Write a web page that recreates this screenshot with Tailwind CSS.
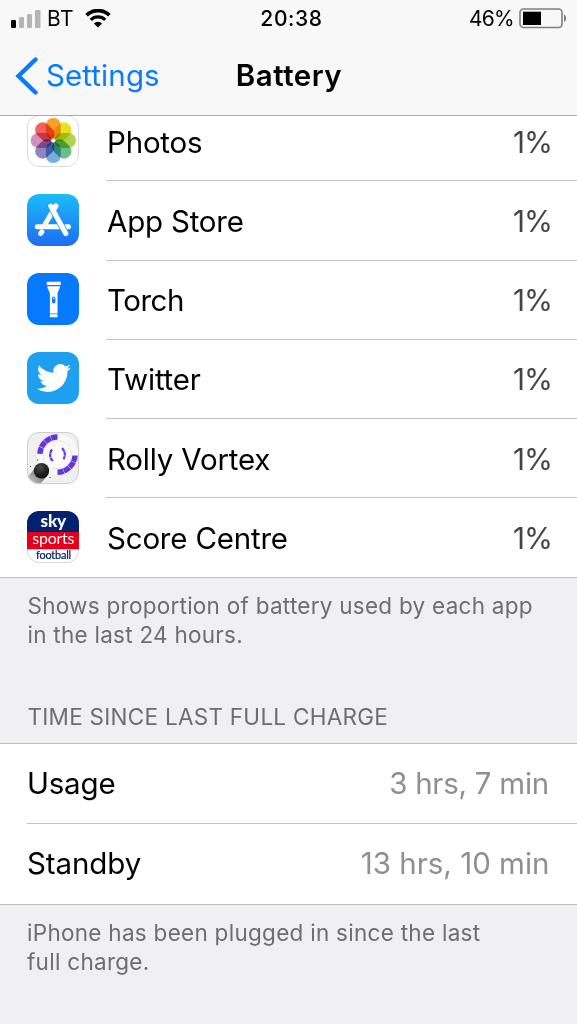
<!DOCTYPE html>
<html lang="en">
<head>
    <meta charset="UTF-8">
    <meta name="viewport" content="width=device-width, initial-scale=1.0">
    <title>Battery</title>
    <script src="https://cdn.jsdelivr.net/npm/@tailwindcss/browser@4"></script>
</head>
<body class="bg-[#efeff4] font-['Inter',sans-serif] text-black w-[577px] h-[1024px] overflow-hidden">

    <!-- Status bar and navigation bar -->
    <header class="relative z-10 h-[116px] bg-[#f8f8f9] border-b border-[#a9a9ac]">
        <div class="grid grid-cols-3 items-center h-[37px] pl-[11px] pr-[10px] text-[21px] leading-none">
            <div class="flex items-center">
                <svg class="w-[30px] h-[18px]" viewBox="0 0 30 18">
                    <rect x="0" y="10" width="5" height="8" rx="1.3" fill="#000"/>
                    <rect x="8" y="7" width="5" height="11" rx="1.3" fill="#b4b4b5"/>
                    <rect x="16" y="4" width="5" height="14" rx="1.3" fill="#b4b4b5"/>
                    <rect x="24" y="0" width="5.5" height="18" rx="1.3" fill="#b4b4b5"/>
                </svg>
                <span class="ml-[6px] tracking-[0.4px]">BT</span>
                <svg class="ml-[11px] w-[26px] h-[19px]" viewBox="0 0 26 19">
                    <path d="M1.6 6.2a16.4 16.4 0 0 1 22.8 0" fill="none" stroke="#000" stroke-width="3.6"/>
                    <path d="M5.8 10.8a10.4 10.4 0 0 1 14.4 0" fill="none" stroke="#000" stroke-width="3.2"/>
                    <path d="M13 18.4L8.9 14.4a5.9 5.9 0 0 1 8.2 0z" fill="#000"/>
                </svg>
            </div>
            <div class="pl-[5px] text-center font-medium tracking-[0.6px]">20:38</div>
            <div class="flex items-center justify-end">
                <span class="tracking-[-0.7px] mr-[5px]">46%</span>
                <svg class="w-[48px] h-[21px]" viewBox="0 0 48 21">
                    <rect x="1" y="1" width="42" height="18.5" rx="3.5" fill="none" stroke="#7f7f80" stroke-width="1.6"/>
                    <rect x="4" y="3.7" width="18" height="13.3" fill="#000"/>
                    <path d="M45 6.5c2.8 1 2.8 6.5 0 7.5z" fill="#7f7f80"/>
                </svg>
            </div>
        </div>
        <div class="grid grid-cols-3 items-center h-[78px] pl-[15px] pr-[15px] text-[29.5px] leading-none">
            <div class="flex items-center text-[#0a7aff]">
                <svg class="w-[24px] h-[38px]" viewBox="0 0 24 38">
                    <path d="M20.5 2.5L3.5 19l17 16.5" fill="none" stroke="#0a7aff" stroke-width="4.4" stroke-linecap="round"/>
                </svg>
                <span class="ml-[7px] tracking-[0.1px]">Settings</span>
            </div>
            <h1 class="pl-[1px] text-center font-semibold tracking-[0.5px]">Battery</h1>
        </div>
    </header>

    <!-- App usage list, scrolled partly under the header -->
    <ul class="-mt-[13.8px] bg-white border-b border-[#bcbcc0] text-[29.5px] leading-none tracking-[-0.2px]">
        <li class="flex h-[79.25px] pl-[27px]">
            <svg class="self-center shrink-0 mb-[2px] w-[52px] h-[52px]" viewBox="0 0 52 52">
                <rect x=".5" y=".5" width="51" height="51" rx="11.5" fill="#fff" stroke="#dcdcdc"/>
                <g transform="translate(26.3 25.5)" class="isolate">
                    <rect x="-7.4" y="-22.5" width="14.8" height="21" rx="7.2" fill="#f9a12b" class="mix-blend-multiply"/>
                    <rect x="-7.4" y="-22.5" width="14.8" height="21" rx="7.2" fill="#ebe01e" class="mix-blend-multiply" transform="rotate(45)"/>
                    <rect x="-7.4" y="-22.5" width="14.8" height="21" rx="7.2" fill="#b0d44c" class="mix-blend-multiply" transform="rotate(90)"/>
                    <rect x="-7.4" y="-22.5" width="14.8" height="21" rx="7.2" fill="#67bf8c" class="mix-blend-multiply" transform="rotate(135)"/>
                    <rect x="-7.4" y="-22.5" width="14.8" height="21" rx="7.2" fill="#72aee0" class="mix-blend-multiply" transform="rotate(180)"/>
                    <rect x="-7.4" y="-22.5" width="14.8" height="21" rx="7.2" fill="#8f86c0" class="mix-blend-multiply" transform="rotate(225)"/>
                    <rect x="-7.4" y="-22.5" width="14.8" height="21" rx="7.2" fill="#d38fbd" class="mix-blend-multiply" transform="rotate(270)"/>
                    <rect x="-7.4" y="-22.5" width="14.8" height="21" rx="7.2" fill="#f1605a" class="mix-blend-multiply" transform="rotate(315)"/>
                    <circle r="2" fill="#fff"/>
                </g>
            </svg>
            <div class="flex flex-1 items-center justify-between ml-[27px] pl-[1px] pr-[25px] pt-[2px] border-b border-[#c3c3c6]">
                <span>Photos</span>
                <span class="text-[#444446] tracking-[-1px]">1%</span>
            </div>
        </li>
        <li class="flex h-[79.25px] pl-[27px]">
            <svg class="self-center shrink-0 mb-[2px] w-[52px] h-[52px]" viewBox="0 0 52 52">
                <defs>
                    <linearGradient id="storeBlue" x1="0" y1="0" x2="0" y2="1">
                        <stop offset="0" stop-color="#1cbcf9"/>
                        <stop offset="1" stop-color="#1d6df1"/>
                    </linearGradient>
                </defs>
                <rect width="52" height="52" rx="12" fill="url(#storeBlue)"/>
                <g fill="none" stroke="#fff" stroke-width="5" stroke-linecap="round">
                    <path d="M10.3 32.8H32M38.5 32.8H41.5"/>
                    <path d="M28.8 12L17.7 31M14.8 37.8L13.7 39.5"/>
                    <path d="M23.7 12L38.8 39.5" stroke="#1f90f5" stroke-width="6.6"/>
                    <path d="M28.8 12L26.3 16.4"/>
                    <path d="M23.7 12L38.8 39.5"/>
                </g>
            </svg>
            <div class="flex flex-1 items-center justify-between ml-[27px] pl-[1px] pr-[25px] pt-[2px] border-b border-[#c3c3c6]">
                <span>App Store</span>
                <span class="text-[#444446] tracking-[-1px]">1%</span>
            </div>
        </li>
        <li class="flex h-[79.25px] pl-[27px]">
            <svg class="self-center shrink-0 mb-[2px] w-[52px] h-[52px]" viewBox="0 0 52 52">
                <rect width="52" height="52" rx="12" fill="#067aff"/>
                <path d="M19.7 8.7h14v3.4h-14zM20.3 13.2h12.8c0 3.2-2.6 4.6-2.6 8v19.2h-7.6V21.2c0-3.4-2.6-4.8-2.6-8zM22.9 41.3h7.6v3h-7.6z" fill="#fff"/>
                <rect x="25" y="23.5" width="3.4" height="7" rx="1.7" fill="#067aff"/>
                <circle cx="26.7" cy="25.3" r=".8" fill="#fff"/>
            </svg>
            <div class="flex flex-1 items-center justify-between ml-[27px] pl-[1px] pr-[25px] pt-[2px] border-b border-[#c3c3c6]">
                <span class="tracking-[-0.5px]">Torch</span>
                <span class="text-[#444446] tracking-[-1px]">1%</span>
            </div>
        </li>
        <li class="flex h-[79.25px] pl-[27px]">
            <svg class="self-center shrink-0 mb-[3px] w-[52px] h-[52px]" viewBox="0 0 52 52">
                <rect width="52" height="52" rx="12" fill="#1f9ff0"/>
                <path transform="translate(9.8 9) scale(1.42)" fill="#fff" d="M23.953 4.57a10 10 0 01-2.825.775 4.958 4.958 0 002.163-2.723c-.951.555-2.005.959-3.127 1.184a4.92 4.92 0 00-8.384 4.482C7.69 8.095 4.067 6.13 1.64 3.162a4.822 4.822 0 00-.666 2.475c0 1.71.87 3.213 2.188 4.096a4.904 4.904 0 01-2.228-.616v.06a4.923 4.923 0 003.946 4.827 4.996 4.996 0 01-2.212.085 4.936 4.936 0 004.604 3.417 9.867 9.867 0 01-6.102 2.105c-.39 0-.779-.023-1.17-.067a13.995 13.995 0 007.557 2.209c9.053 0 13.998-7.496 13.998-13.985 0-.21 0-.42-.015-.63A9.935 9.935 0 0024 4.59z"/>
            </svg>
            <div class="flex flex-1 items-center justify-between ml-[27px] pl-[1px] pr-[25px] pt-[2px] border-b border-[#c3c3c6]">
                <span>Twitter</span>
                <span class="text-[#444446] tracking-[-1px]">1%</span>
            </div>
        </li>
        <li class="flex h-[79.25px] pl-[27px]">
            <svg class="self-center shrink-0 mb-[2px] w-[52px] h-[52px]" viewBox="0 0 52 52">
                <defs>
                    <clipPath id="vortexClip"><rect width="52" height="52" rx="12"/></clipPath>
                    <linearGradient id="trail" x1="1" y1="0" x2="0" y2="1">
                        <stop offset="0" stop-color="#555"/>
                        <stop offset="1" stop-color="#ddd"/>
                    </linearGradient>
                    <radialGradient id="ball" cx=".4" cy=".3" r=".7">
                        <stop offset="0" stop-color="#4a4a4a"/>
                        <stop offset=".6" stop-color="#222"/>
                        <stop offset="1" stop-color="#111"/>
                    </radialGradient>
                </defs>
                <g clip-path="url(#vortexClip)">
                    <rect width="52" height="52" fill="#f0f0f1"/>
                    <circle cx="30.5" cy="22.7" r="21.5" fill="#f8f8f9" stroke="#e2e2e4" stroke-width=".7"/>
                    <circle cx="30.5" cy="22.7" r="14" fill="#fcfcfc" stroke="#e2e2e4" stroke-width=".8"/>
                    <circle cx="30.5" cy="22.7" r="10.5" fill="#fff" stroke="#e8e8ea" stroke-width=".7"/>
                    <g fill="none" stroke="#6534dd">
                        <path d="M12.9 21.8A17.5 17.5 0 0 1 30.5 5" stroke-width="5.4" stroke-dasharray="6.4 .4"/>
                        <path d="M48 23.5A17.5 17.5 0 0 1 30.5 40.2" stroke-width="5.4" stroke-dasharray="6.4 .4"/>
                        <path d="M25 17.5A8.3 8.3 0 0 0 26.2 29.2M35 16.2A8.3 8.3 0 0 1 36.4 27.2" stroke-width="2.2" stroke-dasharray="3.9 .4"/>
                    </g>
                    <path d="M8 36L0 46v10h10l10-12z" fill="url(#trail)"/>
                    <circle cx="14.5" cy="38.7" r="7.7" fill="url(#ball)"/>
                    <path d="M3 34h1v1H3zM10 27.5h1v1h-1zM22.5 45h1v1h-1z" fill="#333"/>
                </g>
                <rect x=".5" y=".5" width="51" height="51" rx="11.5" fill="none" stroke="#cfcfd0"/>
            </svg>
            <div class="flex flex-1 items-center justify-between ml-[27px] pl-[1px] pr-[25px] pt-[2px] border-b border-[#c3c3c6]">
                <span>Rolly Vortex</span>
                <span class="text-[#444446] tracking-[-1px]">1%</span>
            </div>
        </li>
        <li class="flex h-[78.5px] pl-[27px]">
            <svg class="self-center shrink-0 mb-[1px] w-[52px] h-[52px]" viewBox="0 0 52 52">
                <defs>
                    <clipPath id="skyClip"><rect width="52" height="52" rx="12"/></clipPath>
                </defs>
                <rect x=".5" y=".5" width="51" height="51" rx="11.5" fill="#fff" stroke="#d8d8da"/>
                <g clip-path="url(#skyClip)">
                    <rect width="52" height="21" fill="#03216f"/>
                    <rect y="21" width="52" height="17.3" fill="#e4001b"/>
                </g>
                <g class="font-['Lato',sans-serif]" text-anchor="middle">
                    <text x="26.3" y="15.5" font-size="17" font-weight="900" fill="#fff" textLength="25.5" lengthAdjust="spacingAndGlyphs">sky</text>
                    <text x="26.3" y="33" font-size="15" fill="#fff" textLength="42" lengthAdjust="spacingAndGlyphs">sports</text>
                    <text x="26.5" y="48" font-size="10.5" fill="#03216f" stroke="#03216f" stroke-width=".2" textLength="35" lengthAdjust="spacingAndGlyphs">football</text>
                </g>
            </svg>
            <div class="flex flex-1 items-center justify-between ml-[27px] pl-[1px] pr-[25px] pt-[2px]">
                <span>Score Centre</span>
                <span class="text-[#444446] tracking-[-1px]">1%</span>
            </div>
        </li>
    </ul>

    <p class="pt-[13px] pl-[27.5px] text-[22.5px] leading-[29px] tracking-[0.26px] text-[#6d6d72]">
        Shows proportion of battery used by each app<br>in the last 24 hours.
    </p>

    <h2 class="mt-[54px] pb-[12px] pl-[27.5px] text-[22.5px] leading-[28px] tracking-[0.27px] text-[#6d6d72]">TIME SINCE LAST FULL CHARGE</h2>

    <!-- Time since last full charge -->
    <dl class="bg-white border-y border-[#bcbcc0] pl-[27px] text-[29.5px] leading-none">
        <div class="flex items-center justify-between h-[80px] pr-[28px] border-b border-[#c3c3c6]">
            <dt class="tracking-[-0.2px]">Usage</dt>
            <dd class="text-[#8e8e93] tracking-[-0.25px]">3 hrs, 7 min</dd>
        </div>
        <div class="flex items-center justify-between h-[80px] pr-[27.5px]">
            <dt class="tracking-[-0.1px]">Standby</dt>
            <dd class="text-[#8e8e93]">13 hrs, 10 min</dd>
        </div>
    </dl>

    <p class="pt-[13px] pl-[27px] text-[22.5px] leading-[29px] tracking-[0.28px] text-[#6d6d72]">
        iPhone has been plugged in since the last<br>full charge.
    </p>

</body>
</html>
